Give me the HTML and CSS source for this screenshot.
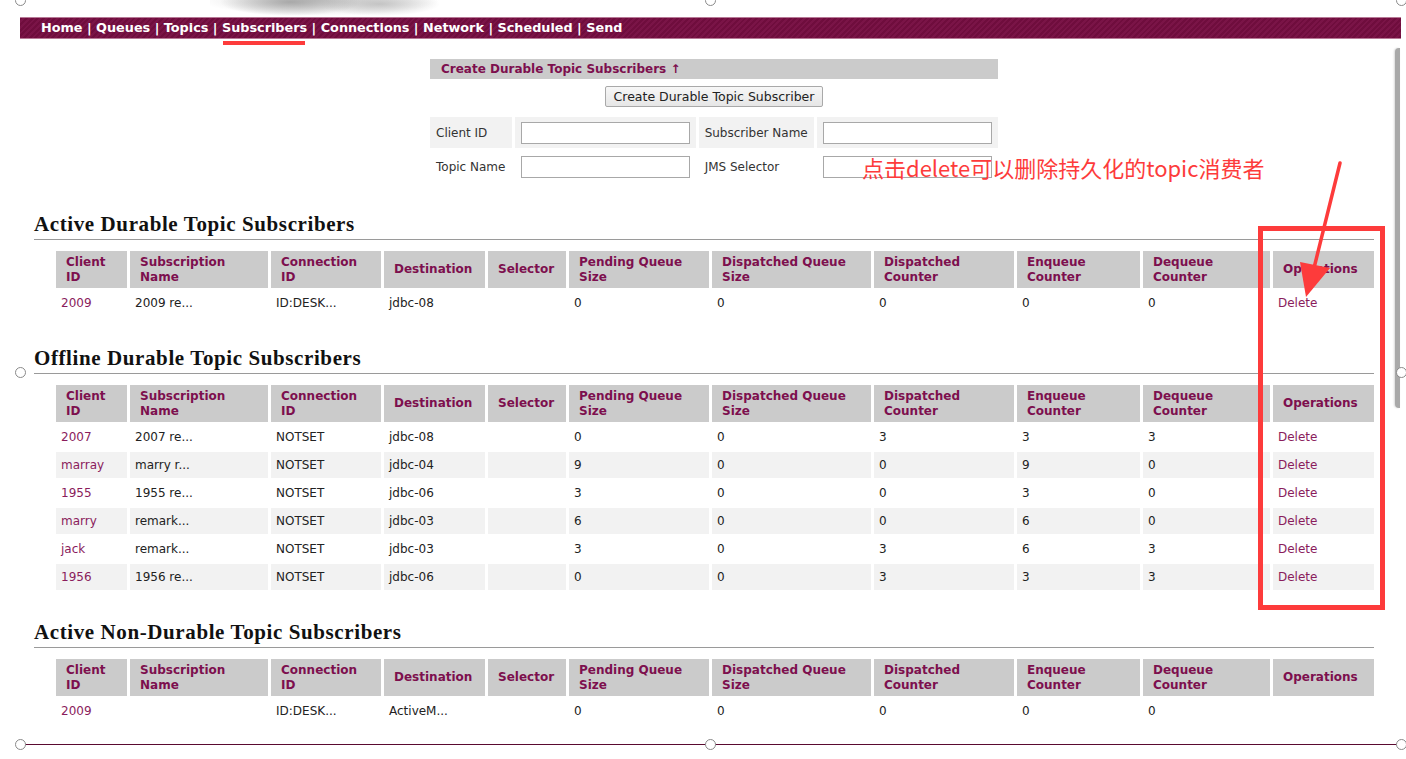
FILE: index.html
```html
<!DOCTYPE html>
<html lang="en">
<head>
<meta charset="utf-8">
<title>Durable Topic Subscribers</title>
<link rel="stylesheet" href="styles.css">
</head>
<body>
<div class="canvas">
  <div class="frame">
    <div class="banner"><div class="logo-blur"></div></div>
    <nav class="topnav">
      <a href="#">Home</a> | <a href="#">Queues</a> | <a href="#">Topics</a> | <a href="#">Subscribers</a> | <a href="#">Connections</a> | <a href="#">Network</a> | <a href="#">Scheduled</a> | <a href="#">Send</a>
    </nav>

    <form class="create-form">
      <table class="form-table">
        <tr><th colspan="4" class="form-title">Create Durable Topic Subscribers ↑</th></tr>
        <tr><td colspan="4" class="form-action"><button type="button" class="btn">Create Durable Topic Subscriber</button></td></tr>
        <tr class="odd">
          <td class="f-label f-l1">Client ID</td>
          <td class="f-input"><input type="text"></td>
          <td class="f-label f-l2">Subscriber Name</td>
          <td class="f-input"><input type="text"></td>
        </tr>
        <tr>
          <td class="f-label">Topic Name</td>
          <td class="f-input"><input type="text"></td>
          <td class="f-label">JMS Selector</td>
          <td class="f-input"><input type="text"></td>
        </tr>
      </table>
    </form>

    <section class="block">
      <h2>Active Durable Topic Subscribers</h2>
      <table class="subs">
        <thead>
          <tr>
            <th class="c1">Client ID</th><th class="c2">Subscription Name</th><th class="c3">Connection ID</th><th class="c4">Destination</th><th class="c5">Selector</th><th class="c6">Pending Queue Size</th><th class="c7">Dispatched Queue Size</th><th class="c8">Dispatched Counter</th><th class="c9">Enqueue Counter</th><th class="c10">Dequeue Counter</th><th class="c11">Operations</th>
          </tr>
        </thead>
        <tbody>
          <tr><td><a href="#">2009</a></td><td>2009 re...</td><td>ID:DESK...</td><td>jdbc-08</td><td></td><td>0</td><td>0</td><td>0</td><td>0</td><td>0</td><td><a href="#">Delete</a></td></tr>
        </tbody>
      </table>
    </section>

    <section class="block">
      <h2>Offline Durable Topic Subscribers</h2>
      <table class="subs">
        <thead>
          <tr>
            <th class="c1">Client ID</th><th class="c2">Subscription Name</th><th class="c3">Connection ID</th><th class="c4">Destination</th><th class="c5">Selector</th><th class="c6">Pending Queue Size</th><th class="c7">Dispatched Queue Size</th><th class="c8">Dispatched Counter</th><th class="c9">Enqueue Counter</th><th class="c10">Dequeue Counter</th><th class="c11">Operations</th>
          </tr>
        </thead>
        <tbody>
          <tr><td><a href="#">2007</a></td><td>2007 re...</td><td>NOTSET</td><td>jdbc-08</td><td></td><td>0</td><td>0</td><td>3</td><td>3</td><td>3</td><td><a href="#">Delete</a></td></tr>
          <tr class="odd"><td><a href="#">marray</a></td><td>marry r...</td><td>NOTSET</td><td>jdbc-04</td><td></td><td>9</td><td>0</td><td>0</td><td>9</td><td>0</td><td><a href="#">Delete</a></td></tr>
          <tr><td><a href="#">1955</a></td><td>1955 re...</td><td>NOTSET</td><td>jdbc-06</td><td></td><td>3</td><td>0</td><td>0</td><td>3</td><td>0</td><td><a href="#">Delete</a></td></tr>
          <tr class="odd"><td><a href="#">marry</a></td><td>remark...</td><td>NOTSET</td><td>jdbc-03</td><td></td><td>6</td><td>0</td><td>0</td><td>6</td><td>0</td><td><a href="#">Delete</a></td></tr>
          <tr><td><a href="#">jack</a></td><td>remark...</td><td>NOTSET</td><td>jdbc-03</td><td></td><td>3</td><td>0</td><td>3</td><td>6</td><td>3</td><td><a href="#">Delete</a></td></tr>
          <tr class="odd"><td><a href="#">1956</a></td><td>1956 re...</td><td>NOTSET</td><td>jdbc-06</td><td></td><td>0</td><td>0</td><td>3</td><td>3</td><td>3</td><td><a href="#">Delete</a></td></tr>
        </tbody>
      </table>
    </section>

    <section class="block">
      <h2>Active Non-Durable Topic Subscribers</h2>
      <table class="subs">
        <thead>
          <tr>
            <th class="c1">Client ID</th><th class="c2">Subscription Name</th><th class="c3">Connection ID</th><th class="c4">Destination</th><th class="c5">Selector</th><th class="c6">Pending Queue Size</th><th class="c7">Dispatched Queue Size</th><th class="c8">Dispatched Counter</th><th class="c9">Enqueue Counter</th><th class="c10">Dequeue Counter</th><th class="c11">Operations</th>
          </tr>
        </thead>
        <tbody>
          <tr><td><a href="#">2009</a></td><td></td><td>ID:DESK...</td><td>ActiveM...</td><td></td><td>0</td><td>0</td><td>0</td><td>0</td><td>0</td><td></td></tr>
        </tbody>
      </table>
    </section>
  </div>

  <!-- screenshot edge / scrollbar -->
  <div class="edge-bar"></div>
  <div class="bottom-line"></div>

  <!-- annotations -->
  <div class="mark-underline"></div>
  <div class="note">点击delete可以删除持久化的topic消费者</div>
  <div class="mark-box"></div>
  <svg class="arrow" width="1406" height="759" viewBox="0 0 1406 759">
    <line x1="1340" y1="163" x2="1314" y2="268" stroke="#fd3b3b" stroke-width="3.5" stroke-linecap="round"/>
    <polygon points="1306,297 1300,262 1330,268" fill="#fd3b3b"/>
  </svg>

  <!-- selection handles -->
  <span class="handle h-tl"></span>
  <span class="handle h-tm"></span>
  <span class="handle h-tr"></span>
  <span class="handle h-ml"></span>
  <span class="handle h-mr"></span>
  <span class="handle h-bl"></span>
  <span class="handle h-bm"></span>
  <span class="handle h-br"></span>
</div>
</body>
</html>
```

FILE: styles.css
```css
* { box-sizing: border-box; }

html, body {
  margin: 0;
  padding: 0;
  background: #fff;
  overflow: hidden;
}

body {
  font-family: "DejaVu Sans", Verdana, sans-serif;
  font-size: 12px;
  color: #222;
}

.canvas {
  position: relative;
  width: 1406px;
  height: 759px;
}

.frame {
  margin-left: 20px;
  width: 1381px;
}

/* banner */
.banner {
  height: 17px;
  overflow: hidden;
}
.logo-blur {
  margin-left: 190px;
  width: 250px;
  height: 17px;
  background:
    radial-gradient(ellipse 70px 14px at 80px 2px, rgba(150,150,150,0.75), rgba(200,200,200,0) 100%),
    radial-gradient(ellipse 60px 12px at 170px 4px, rgba(170,170,170,0.6), rgba(220,220,220,0) 100%),
    radial-gradient(ellipse 120px 16px at 110px 0px, rgba(205,205,205,0.9), rgba(235,235,235,0) 100%);
}

/* nav */
.topnav {
  height: 22px;
  padding-left: 21px;
  line-height: 20px;
  color: #fff;
  font-weight: bold;
  font-size: 12.8px;
  border-top: 1px solid #b77996;
  border-bottom: 1px solid #b77996;
  background: repeating-linear-gradient(135deg, #6f0d3d 0 2px, #7a1447 2px 4px);
}
.topnav a {
  color: #fff;
  text-decoration: none;
}

/* form */
.create-form {
  margin: 17px 0 0 407px;
}
.form-table {
  width: 574px;
  border-collapse: separate;
  border-spacing: 3px 3px;
}
.form-title {
  height: 20px;
  padding: 0 11px;
  background: #cbcbcb;
  color: #7d0f4e;
  text-align: left;
  font-weight: bold;
  line-height: 20px;
}
.form-action {
  text-align: center;
  padding: 4px 0 7px;
}
.btn {
  height: 21px;
  padding: 0 8px;
  font-family: "DejaVu Sans", Verdana, sans-serif;
  font-size: 12.5px;
  color: #222;
  background: linear-gradient(#f7f7f7, #e6e6e6);
  border: 1px solid #a9a9a9;
  border-radius: 2px;
}
.form-table td.f-label,
.form-table td.f-input {
  height: 31px;
  padding: 0 6px;
  vertical-align: middle;
  color: #333;
  white-space: nowrap;
}
.f-l1 { width: 84px; }
.f-l2 { width: 118px; }
.form-table tr.odd td { background: #f2f2f2; }
.f-input input {
  display: block;
  width: 169px;
  height: 22px;
  margin: 0;
  border: 1px solid #a8a8a8;
  background: #fff;
}

/* sections */
.block {
  margin: 27px 0 0 14px;
  width: 1340px;
}
.block + .block {
  margin-top: 28px;
}
.block h2 {
  margin: 0;
  padding-bottom: 3px;
  font-family: "Liberation Serif", "Times New Roman", serif;
  font-weight: bold;
  font-size: 21px;
  letter-spacing: 0.6px;
  line-height: 24px;
  color: #111;
  border-bottom: 1px solid #9a9a9a;
}

.subs {
  margin: 9px 0 0 19px;
  width: 1324px;
  table-layout: fixed;
  border-collapse: separate;
  border-spacing: 3px 2px;
}
.subs th {
  height: 37px;
  padding: 0 10px;
  background: #cbcbcb;
  color: #7d0f4e;
  font-weight: bold;
  text-align: left;
  vertical-align: middle;
  line-height: 15px;
}
.subs td {
  height: 26px;
  padding: 0 5px;
  vertical-align: middle;
  color: #222;
  white-space: nowrap;
  overflow: hidden;
}
.subs tr.odd td { background: #f2f2f2; }
.subs a, .form-table a {
  color: #8a1c5c;
  text-decoration: none;
}

.c1 { width: 71px; }
.c2 { width: 138px; }
.c3 { width: 110px; }
.c4 { width: 101px; }
.c5 { width: 78px; }
.c6 { width: 140px; }
.c7 { width: 159px; }
.c8 { width: 140px; }
.c9 { width: 123px; }
.c10 { width: 127px; }
.c11 { width: 101px; }

/* screenshot chrome */
.edge-bar {
  position: absolute;
  left: 1395px;
  top: 48px;
  width: 5px;
  height: 360px;
  background: #a9a9a9;
  border-radius: 4px 0 0 4px;
  box-shadow: -1px 0 2px rgba(0,0,0,0.15);
}
.bottom-line {
  position: absolute;
  left: 20px;
  top: 744px;
  width: 1381px;
  height: 1px;
  background: #5a0a30;
}
.handle {
  position: absolute;
  width: 11px;
  height: 11px;
  margin: -5px 0 0 -5px;
  border: 1px solid #8a8a8a;
  border-radius: 50%;
  background: #fff;
}
.h-tl { left: 20px; top: 0; }
.h-tm { left: 710px; top: 0; }
.h-tr { left: 1401px; top: 0; }
.h-ml { left: 20px; top: 372px; }
.h-mr { left: 1401px; top: 372px; }
.h-bl { left: 20px; top: 744px; }
.h-bm { left: 710px; top: 744px; }
.h-br { left: 1401px; top: 744px; }

/* annotations */
.mark-underline {
  position: absolute;
  left: 223px;
  top: 41px;
  width: 82px;
  height: 4px;
  background: #fd3b3b;
}
.note {
  position: absolute;
  left: 862px;
  top: 152px;
  font-family: "Noto Sans CJK SC", "Noto Sans", sans-serif;
  font-size: 22px;
  line-height: 30px;
  color: #fd3b3b;
  white-space: nowrap;
}
.mark-box {
  position: absolute;
  left: 1258px;
  top: 226px;
  width: 127px;
  height: 384px;
  border: 5px solid #fd3b3b;
}
.arrow {
  position: absolute;
  left: 0;
  top: 0;
  pointer-events: none;
}
```
